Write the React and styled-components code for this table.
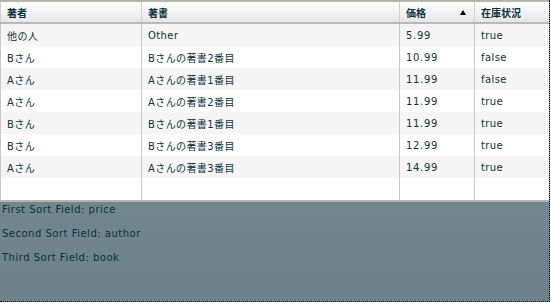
import React from "react";
import styled, { createGlobalStyle } from "styled-components";

const books = [
  { author: "他の人", book: "Other", price: "5.99", stock: "true" },
  { author: "Bさん", book: "Bさんの著書2番目", price: "10.99", stock: "false" },
  { author: "Aさん", book: "Aさんの著書1番目", price: "11.99", stock: "false" },
  { author: "Aさん", book: "Aさんの著書2番目", price: "11.99", stock: "true" },
  { author: "Bさん", book: "Bさんの著書1番目", price: "11.99", stock: "true" },
  { author: "Bさん", book: "Bさんの著書3番目", price: "12.99", stock: "true" },
  { author: "Aさん", book: "Aさんの著書3番目", price: "14.99", stock: "true" },
];

const sortFields = ["price", "author", "book"];
const ordinals = ["First", "Second", "Third"];

const App = () => {
  return (
    <>
      <GlobalStyle />
      <Stage>
        <DataGrid>
          <HeaderRow>
            <HeadCell>著者</HeadCell>
            <HeadCell>著書</HeadCell>
            <HeadCell>
              価格
              <SortArrow />
            </HeadCell>
            <HeadCell>在庫状況</HeadCell>
          </HeaderRow>
          {books.map((b, i) => (
            <Row key={i} $shaded={i % 2 === 0}>
              <Cell>{b.author}</Cell>
              <Cell>{b.book}</Cell>
              <Cell $mono>{b.price}</Cell>
              <Cell>{b.stock}</Cell>
            </Row>
          ))}
          <Row $fill>
            <Cell />
            <Cell />
            <Cell />
            <Cell />
          </Row>
        </DataGrid>
        <SortInfo>
          {sortFields.map((f, i) => (
            <SortLine key={f}>
              {ordinals[i]} Sort Field: {f}
            </SortLine>
          ))}
        </SortInfo>
      </Stage>
    </>
  );
};

export default App;

const GlobalStyle = createGlobalStyle`
  body {
    margin: 0;
    background: #fff;
    font-family: "DejaVu Sans", Verdana, "Noto Sans CJK JP", sans-serif;
    font-size: 10px;
    color: #0b333c;
  }
`;

const Stage = styled.div`
  width: 549px;
  height: 301px;
  border-right: 1px dotted #000;
  border-bottom: 1px dotted #000;
  background: linear-gradient(#7c919a, #6c818a);
  display: flex;
  flex-direction: column;
`;

const DataGrid = styled.div`
  height: 202px;
  box-sizing: border-box;
  background: #fff;
  border-top: 2px solid #b5b5ad;
  border-bottom: 2px solid #b4b4b4;
  display: flex;
  flex-direction: column;
`;

const columns = "141px 258px 75px 75px";

const HeaderRow = styled.div`
  display: grid;
  grid-template-columns: ${columns};
  height: 22px;
  box-sizing: border-box;
  background: linear-gradient(#ffffff, #e6e6e6);
  border-bottom: 2px solid #b9b9b9;
`;

const HeadCell = styled.div`
  display: flex;
  align-items: center;
  justify-content: space-between;
  padding: 0 8px 0 6px;
  border-left: 1px solid #d0d0d0;
  font-weight: bold;
  font-family: "DejaVu Sans", "Noto Sans CJK JP", sans-serif;
`;

const SortArrow = styled.span`
  width: 0;
  height: 0;
  border-left: 3px solid transparent;
  border-right: 3px solid transparent;
  border-bottom: 5px solid #000;
`;

const Row = styled.div`
  display: grid;
  grid-template-columns: ${columns};
  height: 22px;
  flex: ${(p) => (p.$fill ? 1 : "none")};
  background: ${(p) => (p.$shaded ? "#f5f5f5" : "#fff")};
`;

const Cell = styled.div`
  display: flex;
  align-items: center;
  padding-left: 6px;
  border-left: 1px solid #c8c8c8;
  white-space: nowrap;
  letter-spacing: ${(p) => (p.$mono ? "0.7px" : "0.4px")};
`;

const SortInfo = styled.div`
  padding: 1px 2px 0;
`;

const SortLine = styled.div`
  line-height: 14px;
  margin-bottom: 10px;
  letter-spacing: 0.5px;
`;
